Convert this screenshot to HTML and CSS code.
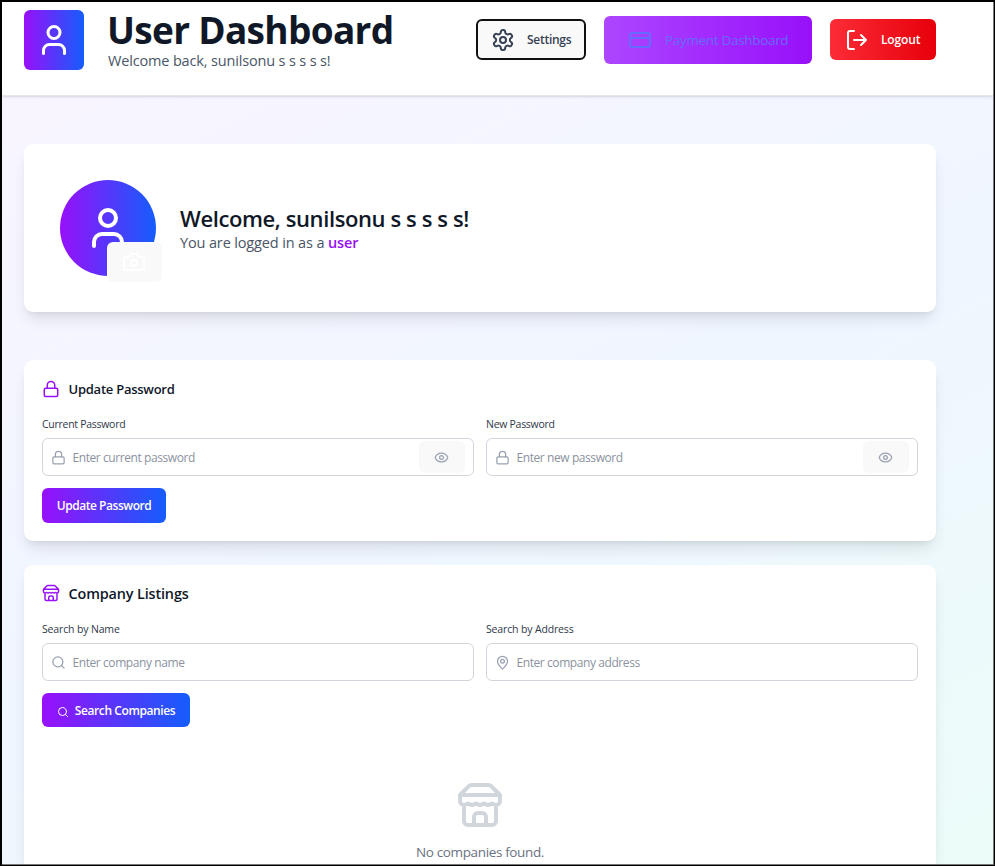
FILE: index.html
```html
<!DOCTYPE html>
<html lang="en">
<head>
<meta charset="utf-8">
<title>User Dashboard</title>
<link rel="stylesheet" href="styles.css">
</head>
<body>
<svg class="defs" aria-hidden="true">
  <symbol id="user" viewBox="0 0 24 24"><path d="M19 21v-2a4 4 0 0 0-4-4H9a4 4 0 0 0-4 4v2"/><circle cx="12" cy="7" r="4"/></symbol>
  <symbol id="gear" viewBox="0 0 24 24"><path d="M12.22 2h-.44a2 2 0 0 0-2 2v.18a2 2 0 0 1-1 1.73l-.43.25a2 2 0 0 1-2 0l-.15-.08a2 2 0 0 0-2.73.73l-.22.38a2 2 0 0 0 .73 2.73l.15.1a2 2 0 0 1 1 1.72v.51a2 2 0 0 1-1 1.74l-.15.09a2 2 0 0 0-.73 2.73l.22.38a2 2 0 0 0 2.73.73l.15-.08a2 2 0 0 1 2 0l.43.25a2 2 0 0 1 1 1.73V20a2 2 0 0 0 2 2h.44a2 2 0 0 0 2-2v-.18a2 2 0 0 1 1-1.73l.43-.25a2 2 0 0 1 2 0l.15.08a2 2 0 0 0 2.73-.73l.22-.39a2 2 0 0 0-.73-2.73l-.15-.08a2 2 0 0 1-1-1.74v-.5a2 2 0 0 1 1-1.74l.15-.09a2 2 0 0 0 .73-2.73l-.22-.38a2 2 0 0 0-2.73-.73l-.15.08a2 2 0 0 1-2 0l-.43-.25a2 2 0 0 1-1-1.73V4a2 2 0 0 0-2-2z"/><circle cx="12" cy="12" r="3"/></symbol>
  <symbol id="card" viewBox="0 0 24 24"><rect x="2" y="5" width="20" height="14" rx="2"/><path d="M2 10h20"/></symbol>
  <symbol id="logout" viewBox="0 0 24 24"><path d="M9 21H5a2 2 0 0 1-2-2V5a2 2 0 0 1 2-2h4M16 17l5-5-5-5M21 12H9"/></symbol>
  <symbol id="camera" viewBox="0 0 24 24"><path d="M14.5 4h-5L7 7H4a2 2 0 0 0-2 2v9a2 2 0 0 0 2 2h16a2 2 0 0 0 2-2V9a2 2 0 0 0-2-2h-3l-2.5-3z"/><circle cx="12" cy="13" r="3"/></symbol>
  <symbol id="lock" viewBox="0 0 24 24"><rect x="3" y="11" width="18" height="11" rx="2"/><path d="M7 11V7a5 5 0 0 1 10 0v4"/></symbol>
  <symbol id="eye" viewBox="0 0 24 24"><path d="M2.06 12.35a1 1 0 0 1 0-.7 10.75 10.75 0 0 1 19.88 0 1 1 0 0 1 0 .7 10.75 10.75 0 0 1-19.88 0"/><circle cx="12" cy="12" r="3"/></symbol>
  <symbol id="search" viewBox="0 0 24 24"><circle cx="11" cy="11" r="8"/><path d="m21 21-4.3-4.3"/></symbol>
  <symbol id="pin" viewBox="0 0 24 24"><path d="M20 10c0 5-5.54 10.2-7.4 11.8a1 1 0 0 1-1.2 0C9.54 20.2 4 15 4 10a8 8 0 0 1 16 0"/><circle cx="12" cy="10" r="3"/></symbol>
  <symbol id="store" viewBox="0 0 24 24"><path d="m2 7 4.41-4.41A2 2 0 0 1 7.83 2h8.34a2 2 0 0 1 1.42.59L22 7M4 12v8a2 2 0 0 0 2 2h12a2 2 0 0 0 2-2v-8M15 22v-4a2 2 0 0 0-2-2h-2a2 2 0 0 0-2 2v4M2 7h20M22 7v3a2 2 0 0 1-2 2a2.7 2.7 0 0 1-1.59-.63.7.7 0 0 0-.82 0A2.7 2.7 0 0 1 16 12a2.7 2.7 0 0 1-1.59-.63.7.7 0 0 0-.82 0A2.7 2.7 0 0 1 12 12a2.7 2.7 0 0 1-1.59-.63.7.7 0 0 0-.82 0A2.7 2.7 0 0 1 8 12a2.7 2.7 0 0 1-1.59-.63.7.7 0 0 0-.82 0A2.7 2.7 0 0 1 4 12a2 2 0 0 1-2-2V7"/></symbol>
</svg>
<header class="topbar">
  <div class="logo"><svg class="icon s36"><use href="#user"/></svg></div>
  <div class="titles">
    <h1>User Dashboard</h1>
    <p>Welcome back, sunilsonu s s s s s!</p>
  </div>
  <nav class="actions">
    <button class="btn settings"><svg class="icon s24"><use href="#gear"/></svg><span>Settings</span></button>
    <button class="btn payment"><svg class="icon s24"><use href="#card"/></svg><span>Payment Dashboard</span></button>
    <button class="btn logout"><svg class="icon s24"><use href="#logout"/></svg><span>Logout</span></button>
  </nav>
</header>
<main>
  <section class="panel welcome">
    <div class="avatar"><svg class="icon s48"><use href="#user"/></svg>
      <button class="camera" aria-label="Change photo"><svg class="icon s24"><use href="#camera"/></svg></button>
    </div>
    <div class="greeting">
      <h2>Welcome, sunilsonu s s s s s!</h2>
      <p>You are logged in as a <b>user</b></p>
    </div>
  </section>
  <section class="panel password">
    <h3><svg class="icon s18"><use href="#lock"/></svg><span>Update Password</span></h3>
    <div class="fields">
      <div><label>Current Password</label>
        <div class="input"><svg class="icon s15"><use href="#lock"/></svg><span>Enter current password</span><button class="reveal" aria-label="Show"><svg class="icon s15"><use href="#eye"/></svg></button></div></div>
      <div><label>New Password</label>
        <div class="input"><svg class="icon s15"><use href="#lock"/></svg><span>Enter new password</span><button class="reveal" aria-label="Show"><svg class="icon s15"><use href="#eye"/></svg></button></div></div>
    </div>
    <button class="submit"><span>Update Password</span></button>
  </section>
  <section class="panel companies">
    <h3><svg class="icon s18"><use href="#store"/></svg><span>Company Listings</span></h3>
    <div class="fields">
      <div><label>Search by Name</label>
        <div class="input"><svg class="icon s15"><use href="#search"/></svg><span>Enter company name</span></div></div>
      <div><label>Search by Address</label>
        <div class="input"><svg class="icon s15"><use href="#pin"/></svg><span>Enter company address</span></div></div>
    </div>
    <button class="submit find"><svg class="icon s12"><use href="#search"/></svg><span>Search Companies</span></button>
    <div class="empty"><svg class="icon s48"><use href="#store"/></svg><p>No companies found.</p></div>
  </section>
</main>
</body>
</html>
```
FILE: styles.css
```css
* { box-sizing: border-box; }
html {
  height: 866px;
  padding: 2px 1px 1px 2px;
  overflow: hidden;
  background: #000;
}
body {
  margin: 0;
  height: 863px;
  overflow: hidden;
  border: 0 solid #777;
  border-width: 0 1px 1px 0;
  font-family: "Open Sans", "Noto Sans", sans-serif;
  color: #101828;
  background: linear-gradient(153deg, #faf5ff 0%, #eff6ff 55%, #ecfdf9 102%);
}
.defs { display: none; }
h1, h2, h3, p { margin: 0; }
button { border: 0; padding: 0; margin: 0; font-family: inherit; letter-spacing: inherit; }
.icon { flex: none; display: block; fill: none; stroke: currentColor; stroke-width: 2; stroke-linecap: round; stroke-linejoin: round; }
.s12 { width: 12px; height: 12px; }
.s15 { width: 15px; height: 15px; }
.s18 { width: 18px; height: 18px; }
.s24 { width: 24px; height: 24px; }
.s36 { width: 36px; height: 36px; }
.s48 { width: 48px; height: 48px; }

.topbar {
  display: flex;
  align-items: flex-start;
  height: 94px;
  padding: 8px 57px 0 22px;
  background: #fff;
  border-bottom: 1px solid #e5e7eb;
  box-shadow: 0 1px 3px rgba(0, 0, 0, .1), 0 1px 2px -1px rgba(0, 0, 0, .1);
}
.logo {
  display: grid;
  place-items: center;
  width: 60px;
  height: 60px;
  border-radius: 6px;
  color: #fff;
  background: linear-gradient(90deg, #9810fa, #155dfc);
}
.titles { margin-left: 23px; white-space: nowrap; }
.titles h1 { font-size: 37px; line-height: 40px; font-weight: 700; letter-spacing: -.68px; }
.titles p { margin-left: 1px; font-size: 14.5px; line-height: 22px; letter-spacing: -.16px; color: #4a5565; }
.actions { display: flex; align-items: center; gap: 18px; height: 60px; margin-left: auto; }
.btn { display: flex; align-items: center; height: 41px; border-radius: 6px; font-size: 12px; font-weight: 600; white-space: nowrap; }
.settings { width: 110px; margin-bottom: 1px; padding-left: 13px; gap: 12px; border: 2px solid #101010; background: #f9f9f9; letter-spacing: -.28px; color: #364153; }
.payment { width: 208px; height: 48px; padding-left: 24px; gap: 13px; font-size: 13.5px; font-weight: 500; letter-spacing: -.32px; color: #646cff; background: linear-gradient(90deg, #ad46ff, #9810fa); }
.logout { width: 106px; margin-bottom: 1px; padding-left: 15px; gap: 12px; letter-spacing: -.15px; color: #fff; background: linear-gradient(90deg, #fb2c36, #e7000b); }

main { padding: 48px 57px 0 22px; }
.panel {
  padding: 18px;
  border-radius: 9px;
  background: #fff;
  box-shadow: 0 10px 15px -3px rgba(0, 0, 0, .1), 0 4px 6px -4px rgba(0, 0, 0, .1);
}
.welcome { display: flex; align-items: center; gap: 24px; height: 168px; padding: 36px; }
.avatar {
  position: relative;
  display: grid;
  place-items: center;
  width: 96px;
  height: 96px;
  border-radius: 50%;
  color: #fff;
  background: linear-gradient(90deg, #9810fa, #155dfc);
}
.camera {
  position: absolute;
  right: -6px;
  bottom: -6px;
  display: grid;
  place-items: center;
  width: 55px;
  height: 40px;
  padding-right: 1px;
  border-radius: 6px;
  color: #fff;
  background: #f9f9f9;
}
.greeting { white-space: nowrap; }
.greeting h2 { font-size: 22px; line-height: 29px; font-weight: 600; letter-spacing: -.4px; }
.greeting p { font-size: 14.5px; line-height: 20px; letter-spacing: -.14px; color: #4a5565; }
.greeting b { font-weight: 600; color: #9810fa; }

.password { margin-top: 48px; height: 181px; }
.companies { margin-top: 24px; height: 299px; border-radius: 9px 9px 0 0; }
.panel h3 { display: flex; align-items: center; gap: 8.5px; height: 22px; margin-bottom: 16px; font-size: 13px; font-weight: 600; letter-spacing: -.25px; }
.panel h3 .icon { color: #9810fa; }
.panel.companies h3 { height: 20px; margin-bottom: 18px; font-size: 14.4px; letter-spacing: -.13px; }
.fields { display: grid; grid-template-columns: 1fr 1fr; gap: 12px; margin-bottom: 12px; }
label { display: block; margin-bottom: 6px; font-size: 10.5px; line-height: 16px; font-weight: 500; letter-spacing: -.28px; color: #2f3948; }
.companies label { letter-spacing: -.15px; }
.input {
  display: flex;
  align-items: center;
  height: 38px;
  padding: 0 8px;
  gap: 6.5px;
  border: 1px solid #d1d5dc;
  border-radius: 6px;
  font-size: 12px;
  letter-spacing: -.42px;
  color: #8b929e;
  background: #fff;
}
.input .icon { color: #99a1af; }
.reveal { display: grid; place-items: center; width: 46px; height: 32px; margin-left: auto; padding-right: 2px; border-radius: 6px; background: #f9f9f9; }
.submit {
  display: flex;
  align-items: center;
  justify-content: center;
  gap: 6px;
  width: 124px;
  height: 35px;
  border-radius: 6px;
  font-size: 12px;
  font-weight: 600;
  letter-spacing: -.46px;
  color: #fff;
  background: linear-gradient(90deg, #9810fa, #155dfc);
}
.find { width: 148px; height: 34px; padding-top: 1px; letter-spacing: -.41px; }
.find .icon { margin-top: 2px; }
.empty { display: flex; flex-direction: column; align-items: center; padding-top: 54px; color: #d1d5dc; }
.empty p { margin-top: 12px; font-size: 13.5px; line-height: 22px; letter-spacing: -.36px; color: #6a7282; }
```
